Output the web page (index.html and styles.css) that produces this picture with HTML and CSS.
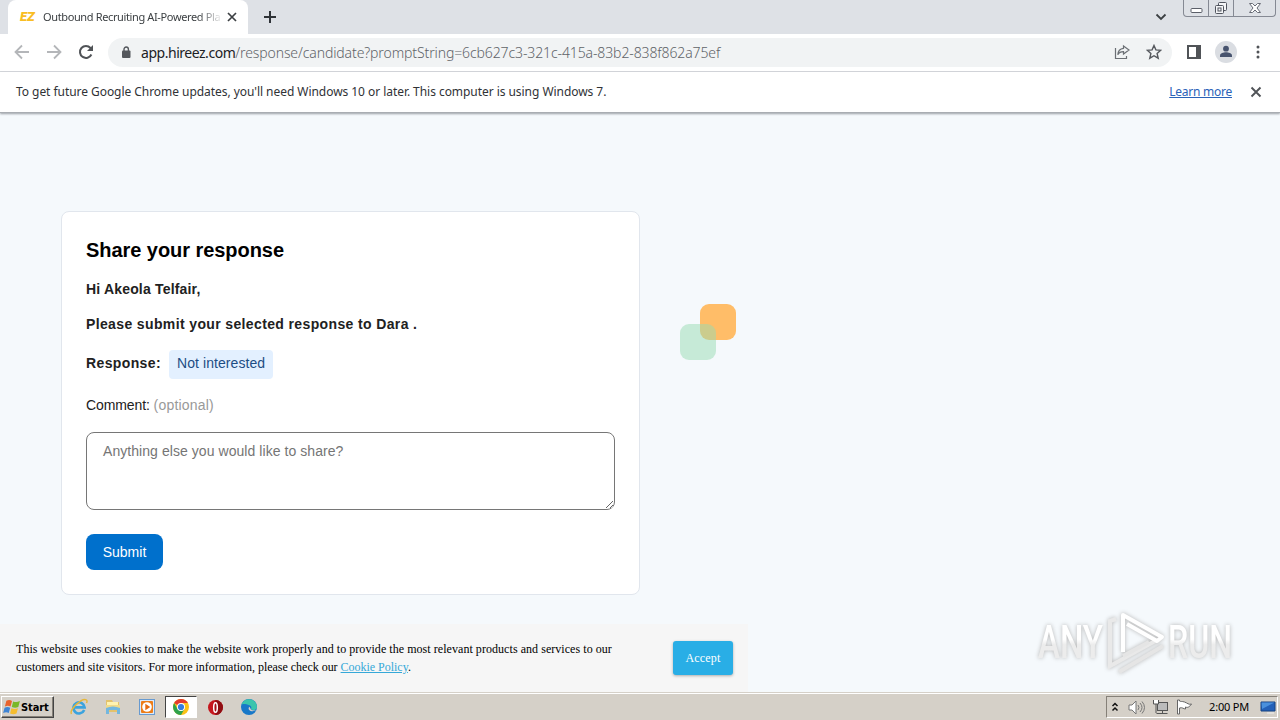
FILE: index.html
```html
<!DOCTYPE html>
<html lang="en">
<head>
  <meta charset="UTF-8" />
  <meta name="viewport" content="width=device-width, initial-scale=1.0" />
  <title>Outbound Recruiting AI-Powered Platform</title>
  <link rel="stylesheet" href="styles.css">
</head>
<body>
  <div class="tabstrip">
    <div class="tab">
      <span class="favicon">EZ</span>
      <span class="tab-title">Outbound Recruiting AI-Powered Pla</span>
      <svg class="tab-close" width="10" height="10" viewBox="0 0 10 10"><path d="M1 1l8 8M9 1l-8 8" stroke="#3c4043" stroke-width="1.7"/></svg>
    </div>
    <svg class="new-tab" width="14" height="14" viewBox="0 0 14 14"><path d="M7 1v12M1 7h12" stroke="#2f3338" stroke-width="2"/></svg>
    <svg class="tab-search" width="12" height="8" viewBox="0 0 12 8"><path d="M1.500 1.500L6 6l4.500-4.500" fill="none" stroke="#3c4043" stroke-width="1.800"/></svg>
    <div class="window-buttons">
      <span><svg width="13" height="16" viewBox="0 0 13 16"><rect x="1" y="8.500" width="11" height="4" rx="1" fill="#fff" stroke="#5b5f69"/></svg></span>
      <span><svg width="14" height="16" viewBox="0 0 14 16"><g fill="#f4f5f7" stroke="#50545e"><rect x="4.500" y="2.500" width="8" height="8" rx="1"/><rect x="1.500" y="5.500" width="8" height="8" rx="1"/><rect x="4" y="8" width="3" height="3"/></g></svg></span>
      <span class="wide"><svg width="14" height="16" viewBox="0 0 14 16"><path d="M1.500 3.500h3L7 6l2.500-2.500h3L9 8l3.500 4.500h-3L7 10l-2.500 2.500h-3L5 8z" fill="#fff" stroke="#686c76"/></svg></span>
    </div>
  </div>

  <div class="toolbar">
    <svg class="nav" width="16" height="16" viewBox="0 0 16 16"><path d="M15 8H2M8 1.500L1.500 8 8 14.500" fill="none" stroke="#b4b6b9" stroke-width="1.800"/></svg>
    <svg class="nav" width="16" height="16" viewBox="0 0 16 16"><path d="M1 8h13M8 1.500L14.500 8 8 14.500" fill="none" stroke="#b4b6b9" stroke-width="1.800"/></svg>
    <svg class="nav" width="16" height="16" viewBox="0 0 16 16"><path d="M13.400 10.500A6 6 0 1 1 12.500 4L14 5.500" fill="none" stroke="#505357" stroke-width="2"/><path d="M15 1v6H9z" fill="#505357"/></svg>
    <div class="omnibox">
      <svg class="lock" width="10" height="13" viewBox="0 0 10 13"><rect x="1" y="4.500" width="8.500" height="7.500" rx="1" fill="#55585d"/><path d="M3 5V3.200a2.200 2.200 0 0 1 4.400 0V5" fill="none" stroke="#55585d" stroke-width="1.400"/></svg>
      <span class="url"><b>app.hireez.com</b>/response/candidate?promptString=6cb627c3-321c-415a-83b2-838f862a75ef</span>
      <svg class="share" width="16" height="16" viewBox="0 0 16 16"><path d="M1.500 4v10.500h11V12" fill="none" stroke="#6b6f74" stroke-width="1.200"/><path d="M9.500 2l5.500 4-5.500 4V7.700C7 7.700 5 8.500 3.800 10.800 4 7 6 4.700 9.500 4.300z" fill="none" stroke="#6b6f74" stroke-width="1.200"/></svg>
      <svg width="16" height="16" viewBox="0 0 16 16"><path d="M8 1.500l1.900 4.400 4.800.4-3.600 3.200 1.100 4.700L8 11.700l-4.200 2.500 1.100-4.700L1.300 6.300l4.800-.4z" fill="none" stroke="#55585d" stroke-width="1.400"/></svg>
    </div>
    <svg class="panel-icon" width="14" height="14" viewBox="0 0 14 14"><path d="M1 1h12v12H1z" fill="none" stroke="#505357" stroke-width="2"/><path d="M9 1h4v12H9z" fill="#505357"/></svg>
    <svg class="avatar" width="22" height="22" viewBox="0 0 22 22"><circle cx="11" cy="11" r="11" fill="#dadde2"/><circle cx="11" cy="7.700" r="2.900" fill="#47536e"/><path d="M5 16v-1.500c0-2 3.500-3.200 6-3.200s6 1.200 6 3.200V16z" fill="#47536e"/></svg>
    <svg class="menu" width="4" height="14" viewBox="0 0 4 14"><g fill="#505357"><circle cx="2" cy="2" r="1.500"/><circle cx="2" cy="7" r="1.500"/><circle cx="2" cy="12" r="1.500"/></g></svg>
  </div>

  <div class="infobar">
    <span class="notice">To get future Google Chrome updates, you'll need Windows 10 or later. This computer is using Windows 7.</span>
    <a class="learn" href="#">Learn more</a>
    <svg width="12" height="12" viewBox="0 0 12 12"><path d="M1.500 1.500l9 9M10.500 1.500l-9 9" stroke="#505357" stroke-width="1.900"/></svg>
  </div>

  <main class="page">
    <section class="card">
      <h1>Share your response</h1>
      <p class="greeting">Hi Akeola Telfair,</p>
      <p class="prompt">Please submit your selected response to Dara .</p>
      <div class="response">
        <span class="response-label">Response:</span>
        <span class="tag">Not interested</span>
      </div>
      <label class="comment" for="comment"><span>Comment:</span> <span class="optional">(optional)</span></label>
      <textarea id="comment" placeholder="Anything else you would like to share?"></textarea>
      <button class="submit">Submit</button>
    </section>

    <div class="loader"><i class="orange"></i><i class="green"></i></div>

    <div class="cookies">
      <p><span class="line-one">This website uses cookies to make the website work properly and to provide the most relevant products and services to our</span><br>
      <span class="line-two">customers and site visitors. For more information, please check our <a href="#">Cookie Policy</a>.</span></p>
      <button class="accept">Accept</button>
    </div>

    <svg class="watermark" width="216" height="72" viewBox="0 0 216 72">
      <defs>
        <linearGradient id="fade" x1="0" y1="0" x2="0" y2="1">
          <stop offset="0.450" stop-color="#fff"/>
          <stop offset="0.550" stop-color="#ececec"/>
        </linearGradient>
      </defs>
      <g fill="url(#fade)">
        <text x="6" y="52" textLength="65" lengthAdjust="spacingAndGlyphs">ANY</text>
        <text x="136" y="52" textLength="64" lengthAdjust="spacingAndGlyphs">RUN</text>
      </g>
      <g fill="none" stroke-width="4">
        <path d="M84 13l-6 2v45l47-26" stroke="#e9e9e9"/>
        <path d="M87 66l44-26M91 50l26-14" stroke="#e5e5e5"/>
        <path d="M91 46V9l39 22-5 4-30-17" stroke="#fff" stroke-linejoin="round"/>
      </g>
    </svg>
  </main>

  <footer class="taskbar">
    <div class="start">
      <svg width="18" height="18" viewBox="0 0 16 16"><path d="M3 2.500c2-1 3.500-.7 5 .1L6.700 7.500c-1.600-.8-3.200-.9-5 0z" fill="#e8622c"/><path d="M9 3c2 .9 3.800.8 6-.3L13.600 8c-2 1-3.800.8-5.800 0z" fill="#79b829"/><path d="M1.400 8.600c1.800-.9 3.400-.8 5 0l-1.300 4.700c-1.600-.8-3-.8-5 .1z" fill="#3e84d4"/><path d="M7.500 9c2 .9 3.800 1 5.800 0L12 13.800c-2 1-3.700.8-5.700 0z" fill="#f5bd2e"/></svg>
      <span>Start</span>
    </div>
    <div class="quick">
      <span class="app"><svg width="18" height="18" viewBox="0 0 18 18"><path d="M14.200 12A5.600 5.600 0 1 1 14.600 9.400H4.500" fill="none" stroke="#3ba3de" stroke-width="2.600"/><path d="M1.500 16C-1 12 12-1 16.500 2c1 .8.500 2 0 3" fill="none" stroke="#e6b73a" stroke-width="1.400"/></svg></span>
      <span class="app"><svg width="18" height="18" viewBox="0 0 18 18"><path d="M2 2h6l1 2h6v10H2z" fill="#e3c26c"/><path d="M3 4h11v5H3z" fill="#fff3b0"/><path d="M2 7h14v4H2z" fill="#f0da8a"/><path d="M2 10q7-3 14 0v6h-3v-4H5v4H2z" fill="#73b7df"/></svg></span>
      <span class="app"><svg width="18" height="18" viewBox="0 0 18 18"><rect x="1.500" y="1.500" width="15" height="15" fill="#dceafa" stroke="#679ad0"/><rect x="3" y="3" width="12" height="12" rx="1" fill="#ed7d18"/><circle cx="9" cy="9" r="4.800" fill="#fff"/><path d="M7.300 5.800l5 3.200-5 3.200z" fill="#e56b10"/></svg></span>
      <span class="app active"><svg width="18" height="18" viewBox="0 0 18 18"><circle cx="9" cy="9" r="8" fill="#fbc116"/><path d="M9 9L2.100 5A8 8 0 0 1 15.900 5H9z" fill="#e33b2e"/><path d="M2.100 5A8 8 0 0 0 9 17l3.500-6L9 9 5.500 11z" fill="#2fa24c"/><circle cx="9" cy="9" r="4" fill="#fff"/><circle cx="9" cy="9" r="3.100" fill="#347de0"/></svg></span>
      <span class="app"><svg width="17" height="17" viewBox="0 0 17 17"><circle cx="8.500" cy="8.500" r="7.500" fill="#c5161d"/><path d="M8.500 1a7.500 7.500 0 0 1 0 15z" fill="#8f0d12"/><ellipse cx="8.500" cy="8.500" rx="1.800" ry="4.800" fill="#a51218" stroke="#fff" stroke-width="1.500"/></svg></span>
      <span class="app"><svg width="18" height="18" viewBox="0 0 18 18"><circle cx="9" cy="9" r="8" fill="#1878c8"/><path d="M1.300 7A8 8 0 0 1 17 9c0 3-4 3.800-6.200 2.300 1-1 .8-3.300-1.300-4C6 6 2.500 5.500 1.300 7z" fill="#3ac5ad"/><path d="M9.500 8.800c-2 1.500-.5 4.200 2.500 4.400 2 .1 3.500-.5 4.400-1.200-2 .8-4.500.6-5.600-.7z" fill="#d5d0c8"/></svg></span>
    </div>
    <div class="tray">
      <svg class="chevrons" width="8" height="12" viewBox="0 0 8 12"><path d="M1.500 5L4 2.500 6.500 5M1.500 9.500L4 7l2.500 2.500" fill="none" stroke="#111" stroke-width="1.500"/></svg>
      <svg class="volume" width="17" height="15" viewBox="0 0 17 15"><path d="M1 5h3l4-4v13l-4-4H1z" fill="#fff" stroke="#777"/><path d="M10 5q2 2.500 0 5M12 3q4 4.500 0 9M14 1.500q5 6 0 12" fill="none" stroke="#777"/></svg>
      <svg class="network" width="18" height="16" viewBox="0 0 18 16"><rect x="5.500" y="3.500" width="10" height="8" fill="#bbb" stroke="#555"/><path d="M4.500 14.500h11M10.500 12v2" stroke="#555"/><path d="M1.500 1v4h5V1M4 5v9" fill="#fff" stroke="#555"/></svg>
      <svg class="flag" width="17" height="16" viewBox="0 0 17 16"><path d="M1.500 1v14h2V9c3-1 4 1 6 1V8c2 1 4 0 6-3-3 1-4-1-7-2s-3 0-5-1V1z" fill="#fff" stroke="#666"/></svg>
      <span class="clock">2:00 PM</span>
      <svg class="desktop" width="16" height="13" viewBox="0 0 16 13"><path d="M1 1h14v9H1z" fill="#2360b8" stroke="#174381"/><path d="M1.500 1.500h13L2 8z" fill="#4a90dc"/><path d="M7 12h7" stroke="#eee"/></svg>
    </div>
  </footer>
</body>
</html>
```

FILE: styles.css
```css
* {
  box-sizing: border-box;
}

body {
  margin: 0;
  width: 1280px;
  height: 720px;
  display: flex;
  flex-direction: column;
  overflow: hidden;
  font-family: "Noto Sans", sans-serif;
  background: #f5f9fc;
}

svg {
  display: block;
  flex: none;
}

/* browser window */
.tabstrip {
  display: flex;
  align-items: center;
  height: 34px;
  background: #dee1e6;
}

.tab {
  display: flex;
  align-items: center;
  align-self: stretch;
  width: 240px;
  margin-left: 8px;
  padding: 0 11px 1px 12px;
  background: #fff;
  border-radius: 8px 8px 0 0;
}

.favicon {
  width: 23px;
  font: italic 900 13px/16px Roboto, sans-serif;
  color: #f9bd23;
}

.tab-title {
  width: 178px;
  white-space: nowrap;
  font-size: 11px;
  letter-spacing: -0.37px;
  color: #3c4043;
  -webkit-mask-image: linear-gradient(to right, #000 155px, transparent 180px);
  mask-image: linear-gradient(to right, #000 155px, transparent 180px);
}

.tab-close {
  margin-left: auto;
}

.new-tab {
  margin-left: 15px;
}

.tab-search {
  margin-left: auto;
}

.window-buttons {
  display: flex;
  align-self: flex-start;
  width: 93px;
  height: 17px;
  margin: 0 4px 0 16px;
  border: 1px solid #858993;
  border-top: 0;
  border-radius: 0 0 4px 4px;
}

.window-buttons span {
  display: flex;
  justify-content: center;
  width: 25px;
  border-right: 1px solid #858993;
}

.window-buttons .wide {
  flex: 1;
  border-right: 0;
}

.toolbar {
  display: flex;
  align-items: center;
  height: 38px;
  padding: 0 20px 1px 14px;
  background: #fff;
  border-bottom: 1px solid #d5d8dc;
}

.nav {
  margin-right: 16px;
}

.omnibox {
  display: flex;
  align-items: center;
  width: 1064px;
  height: 29px;
  margin-left: -2px;
  padding: 0 10px 0 13px;
  border-radius: 15px;
  background: #f1f3f4;
}

.url {
  margin-left: 10px;
  font-size: 14px;
  font-weight: 300;
  letter-spacing: -0.11px;
  color: #5f6368;
}

.url b {
  font-weight: 400;
  letter-spacing: -0.47px;
  color: #202124;
}

.share {
  margin: 0 16px 0 auto;
}

.panel-icon {
  margin-left: 15px;
}

.avatar {
  margin-left: 14px;
}

.menu {
  margin-left: auto;
}

.infobar {
  display: flex;
  align-items: center;
  height: 41px;
  padding: 0 18px 0 16px;
  background: #fff;
  border-bottom: 1px solid #a9adb2;
  box-shadow: 0 1px 2px #9ba0a6;
  font-size: 12px;
  color: #303236;
  z-index: 1;
}

.notice {
  margin-top: -2px;
  letter-spacing: -0.05px;
}

.learn {
  margin: -2px 18px 0 auto;
  letter-spacing: -0.25px;
  color: #2a62b8;
}

/* response form */
.page {
  position: relative;
  flex: 1;
  padding: 98px 0 0 61px;
  background: #f5f9fc;
  font-family: "Liberation Sans", Arial, sans-serif;
}

.card {
  width: 579px;
  height: 384px;
  padding: 26px 24px 24px;
  background: #fff;
  border: 1px solid #e1e6ed;
  border-radius: 8px;
  font-size: 14px;
  color: #212121;
}

.card h1 {
  margin: 0 0 17px;
  font-size: 20px;
  line-height: 24px;
  letter-spacing: -0.05px;
  color: #000;
}

.card p {
  margin: 0 0 15px;
  font-weight: bold;
  line-height: 20px;
}

.card .greeting {
  letter-spacing: 0.18px;
}

.card .prompt {
  letter-spacing: 0.37px;
}

.response {
  display: flex;
  align-items: center;
  height: 30px;
}

.response-label {
  width: 83px;
  margin-top: -3px;
  font-weight: bold;
  letter-spacing: 0.38px;
}

.tag {
  height: 29px;
  padding: 0 8px;
  border-radius: 4px;
  background: #e3f0ff;
  line-height: 27px;
  letter-spacing: 0.07px;
  color: #1d4d84;
}

.comment {
  display: block;
  margin: 16px 0 17px;
  line-height: 20px;
  letter-spacing: -0.1px;
}

.optional {
  letter-spacing: 0.2px;
  color: #999;
}

textarea {
  display: block;
  width: 529px;
  height: 78px;
  margin: 0 0 24px;
  padding: 8px 16px;
  border: 1px solid #767676;
  border-radius: 8px;
  font: 14px/20px "Liberation Sans", Arial, sans-serif;
  letter-spacing: 0.06px;
}

textarea::placeholder {
  color: #757575;
}

.submit {
  width: 77px;
  height: 36px;
  padding: 0;
  border: 0;
  border-radius: 8px;
  background: #0070cc;
  font: 14px "Liberation Sans", Arial, sans-serif;
  color: #fff;
}

/* floating over the page */
.loader {
  position: absolute;
  top: 191px;
  left: 680px;
  width: 56px;
  height: 56px;
}

.loader i {
  position: absolute;
  width: 36px;
  height: 36px;
  border-radius: 9px;
}

.orange {
  top: 0;
  right: 0;
  background: #ffbd68;
}

.green {
  bottom: 0;
  left: 0;
  background: rgba(151, 219, 178, 0.5);
}

.cookies {
  position: absolute;
  bottom: 0;
  left: 0;
  display: flex;
  align-items: center;
  width: 748px;
  height: 68px;
  padding: 0 15px 0 16px;
  background: #f6f6f6;
  font: 12px/18px "Liberation Serif", "Times New Roman", serif;
  color: #000;
}

.cookies p {
  margin: 0;
  white-space: nowrap;
}

.line-one {
  letter-spacing: 0.05px;
}

.line-two {
  letter-spacing: -0.02px;
}

.cookies a {
  color: #35a8d8;
}

.accept {
  width: 60px;
  height: 34px;
  margin-left: auto;
  padding: 0;
  border: 0;
  border-radius: 3px;
  background: #29aee6;
  box-shadow: 0 1px 3px rgba(0, 0, 0, 0.3);
  font: 12px "Liberation Serif", "Times New Roman", serif;
  letter-spacing: 0.2px;
  color: #fff;
}

.watermark {
  position: absolute;
  right: 32px;
  bottom: 14px;
  overflow: visible;
  font: 500 46px Roboto, sans-serif;
  filter: drop-shadow(0 0 2px #b5b5b5);
}

/* windows taskbar */
.taskbar {
  display: flex;
  align-items: center;
  height: 28px;
  padding: 1px 2px 0 1px;
  background: #d5d0c8;
  border-top: 1px solid #d5d0c8;
  box-shadow: inset 0 1px #fff;
  z-index: 1;
}

.start {
  display: flex;
  align-items: center;
  width: 53px;
  height: 22px;
  padding-left: 1px;
  border: 1px solid;
  border-color: #fff #444 #444 #fff;
  box-shadow: inset -1px -1px #858078;
  font: bold 11px "DejaVu Sans Condensed", "DejaVu Sans", sans-serif;
  color: #000;
}

.start span {
  letter-spacing: -0.1px;
}

.quick {
  display: flex;
  margin-left: 9px;
  gap: 2px;
}

.app {
  display: flex;
  align-items: center;
  justify-content: center;
  width: 32px;
  height: 22px;
}

.active {
  background: #fff;
  border: 1px solid;
  border-color: #444 #fff #fff #444;
}

.tray {
  display: flex;
  align-items: center;
  width: 172px;
  height: 22px;
  margin-left: auto;
  padding: 0 1px 0 4px;
  border: 1px solid;
  border-color: #858078 #fff #fff #858078;
}

.volume {
  margin-left: 9px;
}

.network {
  margin-left: 7px;
}

.flag {
  margin-left: 6px;
}

.clock {
  margin: -2px 0 0 auto;
  font-size: 11px;
  letter-spacing: -0.2px;
  color: #000;
}

.desktop {
  margin-left: 11px;
}
```
